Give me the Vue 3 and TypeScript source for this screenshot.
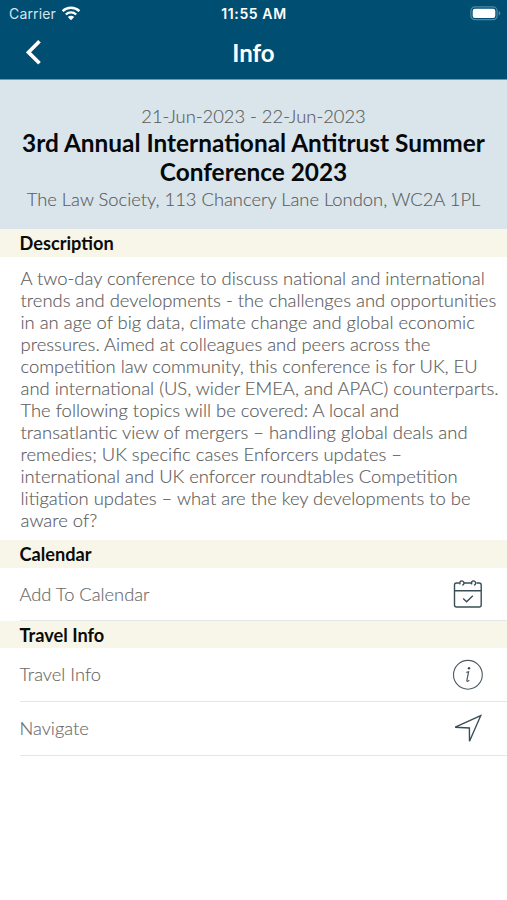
<script setup lang="ts">
interface Row {
  label: string
  icon: 'calendar' | 'info' | 'navigate'
}

interface Section {
  title: string
  kind: 'calendar' | 'travel'
  rows: Row[]
}

const description: string = [
  'A two-day conference to discuss national and international',
  'trends and developments - the challenges and opportunities',
  'in an age of big data, climate change and global economic',
  'pressures. Aimed at colleagues and peers across the',
  'competition law community, this conference is for UK, EU',
  'and international (US, wider EMEA, and APAC) counterparts.',
  'The following topics will be covered: A local and',
  'transatlantic view of mergers – handling global deals and',
  'remedies; UK specific cases Enforcers updates –',
  'international and UK enforcer roundtables Competition',
  'litigation updates – what are the key developments to be',
  'aware of?',
].join('\n')

const sections: Section[] = [
  { title: 'Calendar', kind: 'calendar', rows: [{ label: 'Add To Calendar', icon: 'calendar' }] },
  {
    title: 'Travel Info',
    kind: 'travel',
    rows: [
      { label: 'Travel Info', icon: 'info' },
      { label: 'Navigate', icon: 'navigate' },
    ],
  },
]
</script>

<template>
  <main class="screen">
    <header class="top">
      <div class="status">
        <div class="carrier">
          <span>Carrier</span>
          <svg class="wifi" width="20" height="15" viewBox="0 0 20 15" fill="none">
            <path d="M1.6 5.1C6.4 .6 13.6 .6 18.4 5.1" stroke="#fff" stroke-width="2.5" />
            <path d="M4.8 8.5C7.8 5.7 12.2 5.7 15.2 8.5" stroke="#fff" stroke-width="2.3" />
            <path d="M10 14.2L6.8 10.9C8.6 9.3 11.4 9.3 13.2 10.9Z" fill="#fff" />
          </svg>
        </div>
        <time class="clock">11:55 AM</time>
        <svg class="battery" width="31" height="15" viewBox="0 0 31 15" fill="none">
          <rect x=".9" y=".9" width="26.2" height="12.8" rx="4" stroke="#5288a3" stroke-width="1.2" />
          <rect x="2.7" y="2.7" width="22.6" height="9.2" rx="2.2" fill="#fff" />
          <path d="M28.7 5v4.6c1-.4 1.6-1.2 1.6-2.3s-.6-1.9-1.6-2.3Z" fill="#5288a3" />
        </svg>
      </div>
      <nav class="nav">
        <button class="back" aria-label="Back">
          <svg width="16" height="26" viewBox="0 0 16 26" fill="none">
            <path d="M13.500 1.300L2.500 12.300L13.500 23.300" stroke="#fff" stroke-width="3.700" />
          </svg>
        </button>
        <h1 class="title">Info</h1>
      </nav>
    </header>

    <section class="hero">
      <p class="dates">21-Jun-2023 - 22-Jun-2023</p>
      <h2 class="event">3rd Annual International Antitrust Summer Conference 2023</h2>
      <p class="venue">The Law Society, 113 Chancery Lane London, WC2A 1PL</p>
    </section>

    <h3 class="bar">Description</h3>
    <p class="description">{{ description }}</p>

    <section v-for="section in sections" :key="section.title" :class="section.kind">
      <h3 class="bar">{{ section.title }}</h3>
      <div v-for="row in section.rows" :key="row.label" class="row">
        <span class="label">{{ row.label }}</span>
        <svg class="icon" width="32" height="32" viewBox="0 0 32 32" fill="none" stroke="#3a4d57" stroke-width="1.4">
          <template v-if="row.icon === 'calendar'">
            <path d="M7.2 5H4.5A2 2 0 0 0 2.5 7V27A2 2 0 0 0 4.5 29H27.2A2 2 0 0 0 29.2 27V7A2 2 0 0 0 27.2 5H24.5M12 5H19.8M2.5 12.8H29.2" />
            <path d="M8.3 6.4A2.1 2.1 0 1 1 10.2 7.1M20 6.4A2.1 2.1 0 1 1 21.9 7.1" />
            <path d="M11.2 20.4L14.6 23.7L20.8 17.7" />
          </template>
          <template v-else-if="row.icon === 'info'">
            <circle cx="15.9" cy="15.8" r="14.4" stroke="#4c5a62" stroke-width="1.1" />
            <path d="M14.3 13.3L16.6 12.7L14.9 21.3C14.7 22.6 15.6 22.7 17.3 21.3" stroke="#4c5a62" stroke-width="1.2" />
            <circle cx="17" cy="9.3" r="1.2" fill="#3a4d57" stroke="none" />
          </template>
          <path v-else d="M28.7 2.7L3.2 14.2L17.4 15L17.5 28.3Z" />
        </svg>
      </div>
    </section>
  </main>
</template>

<style>
body {
  margin: 0;
  background: #fff;
}
</style>

<style scoped>
.screen {
  width: 507px;
  height: 900px;
  overflow: hidden;
  background: #fff;
  font-family: Lato, sans-serif;
  font-weight: 300;
  color: #5c5c5c;
}

h1,
h2,
h3,
p {
  margin: 0;
}

.top {
  box-sizing: border-box;
  height: 80px;
  background: #004e72;
  border-bottom: 1px solid #5e9eb9;
  color: #fff;
}

.status {
  display: grid;
  grid-template-columns: 1fr auto 1fr;
  align-items: center;
  box-sizing: border-box;
  height: 27px;
  padding: 0 6px 0 9px;
  font-family: Inter, sans-serif;
  font-size: 14px;
}

.carrier {
  display: flex;
  align-items: center;
  gap: 5px;
  font-weight: 400;
  letter-spacing: 0.15px;
  color: #d5e5ec;
}

.clock {
  padding-right: 2px;
  font-weight: 600;
  letter-spacing: 0.6px;
}

.battery {
  justify-self: end;
}

.nav {
  display: grid;
  grid-template-columns: 60px 1fr 60px;
  align-items: center;
  height: 52px;
}

.back {
  display: flex;
  padding: 0 0 0 26px;
  border: 0;
  background: none;
}

.title {
  text-align: center;
  font-size: 24px;
  font-weight: 700;
  line-height: 30px;
}

.hero {
  box-sizing: border-box;
  height: 149px;
  padding-top: 24px;
  background: #d9e5eb;
  text-align: center;
}

.dates,
.venue {
  font-size: 18.35px;
  line-height: 25px;
}

.dates,
.venue,
.description,
.label {
  -webkit-text-stroke: 0.15px currentColor;
}

.event {
  margin: -1px 0 1px;
  padding: 0 10px;
  font-size: 24.4px;
  font-weight: 700;
  line-height: 29px;
  color: #05090c;
}

.bar {
  box-sizing: border-box;
  height: 28px;
  padding-left: 19.5px;
  background: #f8f6e8;
  font-size: 18.2px;
  font-weight: 700;
  line-height: 28px;
  color: #0b0b08;
}

.description {
  box-sizing: border-box;
  height: 283px;
  padding: 10px 0 0 20.5px;
  font-size: 18.42px;
  line-height: 22px;
  white-space: pre;
}

.row {
  display: flex;
  align-items: center;
  justify-content: space-between;
  box-sizing: border-box;
  height: 54px;
  margin-left: 19.5px;
  padding-right: 23px;
  border-bottom: 1px solid #e6e6e6;
  font-size: 18.3px;
  color: #6a6a6a;
}

.calendar .row {
  height: 53px;
}

.travel .bar {
  height: 27px;
  line-height: 28px;
}

.travel .label {
  padding-bottom: 1px;
}
</style>
